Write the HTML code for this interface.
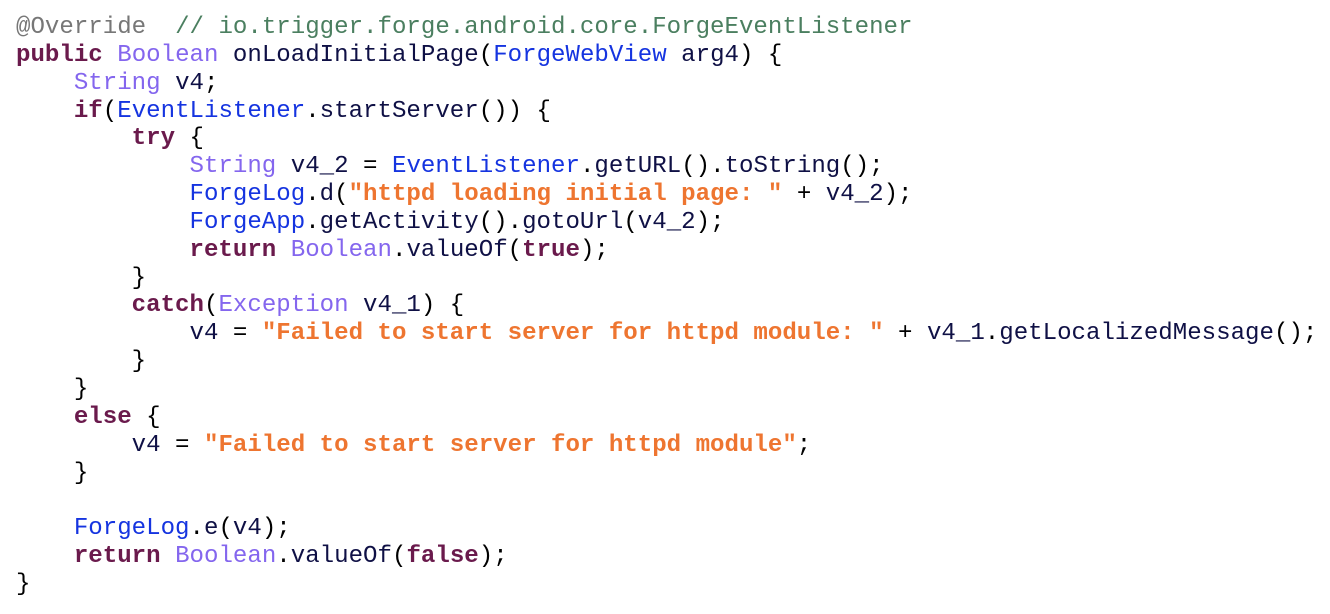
<!DOCTYPE html>
<html><head><style>
body{margin:0;background:#fff;width:1330px;height:614px;overflow:hidden}
pre{margin:0;position:absolute;left:16px;top:14px;font-family:"Liberation Mono","DejaVu Sans Mono",monospace;font-size:24.1px;line-height:27.85px;color:#0f1045}
.k{color:#6a1a4c;font-weight:bold}.t{color:#8466ee}.c{color:#1534e0}.s{color:#ee7530;font-weight:bold}.g{color:#4b7f60}.a{color:#777}.p{color:#000}
</style></head><body><pre><span class="a">@Override</span>  <span class="g">// io.trigger.forge.android.core.ForgeEventListener</span>
<span class="k">public</span> <span class="t">Boolean</span> onLoadInitialPage<span class="p">(</span><span class="c">ForgeWebView</span> arg4<span class="p">) {</span>
    <span class="t">String</span> v4<span class="p">;</span>
    <span class="k">if</span><span class="p">(</span><span class="c">EventListener</span><span class="p">.</span>startServer<span class="p">()) {</span>
        <span class="k">try</span> <span class="p">{</span>
            <span class="t">String</span> v4_2 <span class="p">=</span> <span class="c">EventListener</span><span class="p">.</span>getURL<span class="p">().</span>toString<span class="p">();</span>
            <span class="c">ForgeLog</span><span class="p">.</span>d<span class="p">(</span><span class="s">"httpd loading initial page: "</span> <span class="p">+</span> v4_2<span class="p">);</span>
            <span class="c">ForgeApp</span><span class="p">.</span>getActivity<span class="p">().</span>gotoUrl<span class="p">(</span>v4_2<span class="p">);</span>
            <span class="k">return</span> <span class="t">Boolean</span><span class="p">.</span>valueOf<span class="p">(</span><span class="k">true</span><span class="p">);</span>
        <span class="p">}</span>
        <span class="k">catch</span><span class="p">(</span><span class="t">Exception</span> v4_1<span class="p">) {</span>
            v4 <span class="p">=</span> <span class="s">"Failed to start server for httpd module: "</span> <span class="p">+</span> v4_1<span class="p">.</span>getLocalizedMessage<span class="p">();</span>
        <span class="p">}</span>
    <span class="p">}</span>
    <span class="k">else</span> <span class="p">{</span>
        v4 <span class="p">=</span> <span class="s">"Failed to start server for httpd module"</span><span class="p">;</span>
    <span class="p">}</span>

    <span class="c">ForgeLog</span><span class="p">.</span>e<span class="p">(</span>v4<span class="p">);</span>
    <span class="k">return</span> <span class="t">Boolean</span><span class="p">.</span>valueOf<span class="p">(</span><span class="k">false</span><span class="p">);</span>
<span class="p">}</span></pre></body></html>
